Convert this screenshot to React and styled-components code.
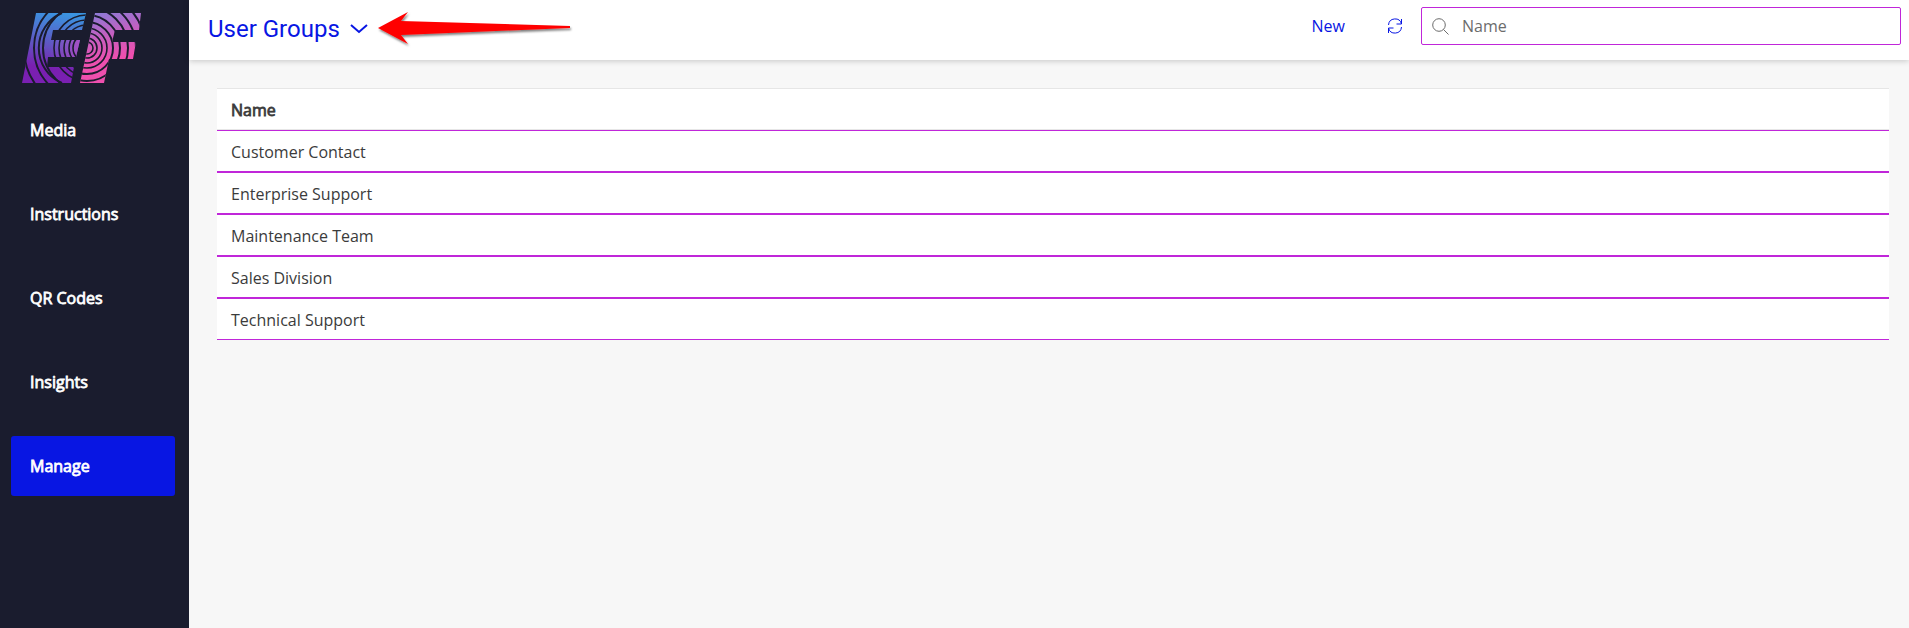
import React, { useState } from 'react';
import styled, { createGlobalStyle } from 'styled-components';

const groups = [
  {id: 1, name: 'Customer Contact'},
  {id: 2, name: 'Enterprise Support'},
  {id: 3, name: 'Maintenance Team'},
  {id: 4, name: 'Sales Division'},
  {id: 5, name: 'Technical Support'}
]

const navItems = ['Media', 'Instructions', 'QR Codes', 'Insights', 'Manage'];

// radii of the dark rings cut into each half of the logo
const leftRings = [14, 18, 23, 28, 33, 44, 53, 63];
const rightRings = [6, 10, 15, 20, 26, 33, 41, 49, 58];

const GlobalStyle = createGlobalStyle`
  body{
    margin: 0;
    background: #f7f7f7;
    color: #3b3b3b;
    font-family: 'Open Sans', sans-serif;
    font-size: 16px;
    line-height: 24px;
  }

  *{
    box-sizing: border-box;
  }
`;

const Layout = styled.div`
  display: flex;
  min-height: 100vh;
`;

const Sidebar = styled.aside`
  display: flex;
  flex-direction: column;
  flex: none;
  width: 189px;
  padding: 12px 14px 24px 11px;
  background: #1a1c2e;
`;

const Logo = styled.svg`
  display: block;
  flex: none;
  margin: 0 0 16px 10px;
`;

const Nav = styled.nav`
  display: flex;
  flex-direction: column;
  gap: 24px;
`;

const NavLink = styled.a`
  padding: 18px 19px;
  border-radius: 3px;
  background: ${props => props.$active ? '#0816e3' : 'transparent'};
  color: #ffffff;
  -webkit-text-stroke: 0.05em currentColor;
  text-decoration: none;
`;

const Main = styled.div`
  flex: 1;
  min-width: 0;
`;

const Header = styled.header`
  display: flex;
  align-items: flex-start;
  justify-content: space-between;
  height: 60px;
  padding: 7px 8px 0 19px;
  background: #ffffff;
  box-shadow: 0 1px 6px rgba(0, 0, 0, 0.2);
`;

const TitleArea = styled.div`
  display: flex;
  align-items: center;
  gap: 8px;
  padding-top: 3px;
`;

const TitleButton = styled.button`
  display: flex;
  align-items: center;
  gap: 10px;
  padding: 0;
  border: 0;
  background: none;
  color: #0816e3;
  font-family: Roboto, sans-serif;
  font-size: 24px;
  line-height: 34px;
  cursor: pointer;
`;

const Actions = styled.div`
  display: flex;
  align-items: center;
`;

const ActionButton = styled.button`
  display: flex;
  padding: 0;
  border: 0;
  margin-right: ${props => props.$gap};
  background: none;
  color: #0816e3;
  font: inherit;
  cursor: pointer;
`;

const SearchBox = styled.label`
  display: flex;
  align-items: center;
  gap: 13px;
  width: 480px;
  min-width: 240px;
  height: 38px;
  padding: 0 10px;
  border: 1px solid #c026d9;
  border-radius: 2px;
  color: #6c6c6c;
`;

const SearchInput = styled.input`
  flex: 1;
  min-width: 0;
  padding: 0;
  border: 0;
  outline: 0;
  background: none;
  color: #3b3b3b;
  font: inherit;

  &::placeholder{
    color: #6c6c6c;
    opacity: 1;
  }
`;

const Content = styled.main`
  padding: 28px 20px 28px 28px;
`;

const Table = styled.table`
  width: 100%;
  border-collapse: separate;
  border-spacing: 0;
  background: #ffffff;
`;

const HeadCell = styled.th`
  padding: 9px 14px 7px;
  border: solid #e6e6e6;
  border-width: 1px 0;
  font-weight: 400;
  -webkit-text-stroke: 0.05em currentColor;
  text-align: left;
`;

const Cell = styled.td`
  padding: 9px 14px 7px;
  border: solid #c026d9;
  border-width: 1px 0;
`;

function EFLogo(){
  return(
    <Logo width="120" height="72" viewBox="21 12 120 72" role="img" aria-label="EF">
      <defs>
        <linearGradient id="leftFill" gradientUnits="userSpaceOnUse" x1="62" y1="13" x2="52" y2="83">
          <stop offset="0" stopColor="#3a94e0"/>
          <stop offset="0.5" stopColor="#6350c0"/>
          <stop offset="0.8" stopColor="#7a1fb0"/>
          <stop offset="1" stopColor="#7a20b2"/>
        </linearGradient>
        <linearGradient id="rightFill" gradientUnits="userSpaceOnUse" x1="96" y1="13" x2="108" y2="60">
          <stop offset="0" stopColor="#8d7ad6"/>
          <stop offset="0.5" stopColor="#c45fc0"/>
          <stop offset="1" stopColor="#ee4fae"/>
        </linearGradient>
        <linearGradient id="innerGlow" gradientUnits="userSpaceOnUse" x1="50" y1="48" x2="82" y2="48">
          <stop offset="0" stopColor="#a04fc4" stopOpacity="0"/>
          <stop offset="1" stopColor="#b04fc4"/>
        </linearGradient>
        <clipPath id="leftShape">
          <path d="M36 13H86L82 30H53L51 40H80L76 57H48L47 67H74L71 83H22Z"/>
        </clipPath>
        <clipPath id="rightShape">
          <path d="M95 13H141L139 30H115L112 42H136L133 59H109L104 83H80Z"/>
        </clipPath>
      </defs>
      <g clipPath="url(#leftShape)" fill="none" stroke="#1a1c2e">
        <rect x="21" y="12" width="70" height="72" fill="url(#leftFill)" stroke="none"/>
        <rect x="50" y="38" width="34" height="21" fill="url(#innerGlow)" stroke="none"/>
        {leftRings.map(r => <circle key={r} cx="87" cy="48" r={r} strokeWidth={r > 35 ? 2 : 1.6}/>)}
        <path d="M62 83A38 38 0 0 1 62 13" strokeWidth="2"/>
      </g>
      <g clipPath="url(#rightShape)" fill="none" stroke="#1a1c2e">
        <rect x="78" y="12" width="64" height="72" fill="url(#rightFill)" stroke="none"/>
        {rightRings.map(r => <circle key={r} cx="87" cy="48" r={r} strokeWidth={r > 24 ? 2 : 1.6}/>)}
      </g>
    </Logo>
  );
}

function Chevron(){
  return(
    <svg width="18" height="12" viewBox="0 0 18 12" fill="none" stroke="currentColor" strokeWidth="2" aria-hidden="true">
      <path d="M1 2L9 9L17 2"/>
    </svg>
  );
}

function RefreshIcon(){
  return(
    <svg width="16" height="16" viewBox="0 0 16 16" fill="none" stroke="currentColor" aria-hidden="true">
      <path d="M1.5 7A6.6 6.6 0 0 1 14.5 6M14.5 1V6H9.5"/>
      <path d="M14.5 9A6.6 6.6 0 0 1 1.5 10M1.5 15V10H6.5"/>
    </svg>
  );
}

function SearchIcon(){
  return(
    <svg width="17" height="17" viewBox="0 0 17 17" fill="none" stroke="currentColor" aria-hidden="true">
      <circle cx="7" cy="7" r="6.3"/>
      <path d="M11.5 11.5L16.5 16.5"/>
    </svg>
  );
}

function PointerArrow(){
  return(
    <svg width="200" height="38" viewBox="0 0 200 38" aria-hidden="true">
      <defs>
        <filter id="arrowShadow" x="-5%" y="-10%" width="110%" height="130%">
          <feDropShadow dx="1" dy="2" stdDeviation="1" floodColor="#000000" floodOpacity="0.5"/>
        </filter>
      </defs>
      <path d="M2 18L32 2L25 11L194 16V18L25 25L32 34Z" fill="#ff0000" filter="url(#arrowShadow)"/>
    </svg>
  );
}

export default function App(){
  const [query, setQuery] = useState('');
  const [active, setActive] = useState('Manage');

  const visible = groups.filter(group => group.name.toLowerCase().includes(query.toLowerCase()));

  return(
    <Layout>
      <GlobalStyle />
      <Sidebar>
        <EFLogo />
        <Nav>
          {navItems.map(item => (
            <NavLink key={item} href="#" $active={item === active} onClick={() => setActive(item)}>
              {item}
            </NavLink>
          ))}
        </Nav>
      </Sidebar>
      <Main>
        <Header>
          <TitleArea>
            <TitleButton>
              User Groups
              <Chevron />
            </TitleButton>
            <PointerArrow />
          </TitleArea>
          <Actions>
            <ActionButton $gap="42px">New</ActionButton>
            <ActionButton $gap="18px" aria-label="Refresh"><RefreshIcon /></ActionButton>
            <SearchBox>
              <SearchIcon />
              <SearchInput
                type="text"
                aria-label="Name"
                placeholder="Name"
                value={query}
                onChange={(evt) => setQuery(evt.target.value)}/>
            </SearchBox>
          </Actions>
        </Header>
        <Content>
          <Table>
            <thead>
              <tr><HeadCell scope="col">Name</HeadCell></tr>
            </thead>
            <tbody>
              {visible.map(group => (
                <tr key={group.id}><Cell>{group.name}</Cell></tr>
              ))}
            </tbody>
          </Table>
        </Content>
      </Main>
    </Layout>
  );
}
